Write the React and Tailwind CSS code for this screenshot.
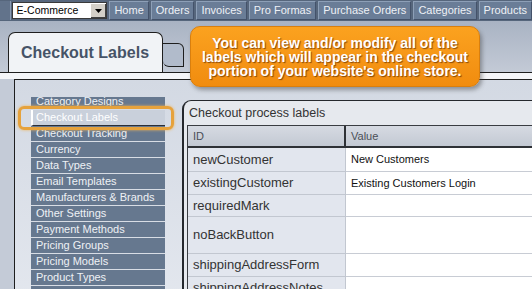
const navItems = ["Home", "Orders", "Invoices", "Pro Formas", "Purchase Orders", "Categories", "Products"];

const menuItems = [
  "Category Designs",
  "Checkout Labels",
  "Checkout Tracking",
  "Currency",
  "Data Types",
  "Email Templates",
  "Manufacturers & Brands",
  "Other Settings",
  "Payment Methods",
  "Pricing Groups",
  "Pricing Models",
  "Product Types",
  "Shipping",
];

const rows = [
  { id: "newCustomer", value: "New Customers", h: "h-[24px]" },
  { id: "existingCustomer", value: "Existing Customers Login", h: "h-[23px]" },
  { id: "requiredMark", value: "", h: "h-[22px]" },
  { id: "noBackButton", value: "", h: "h-[37px]" },
  { id: "shippingAddressForm", value: "", h: "h-[23px]" },
  { id: "shippingAddressNotes", value: "", h: "h-[23px]" },
];

function TopNav() {
  return (
    <div className="flex h-[21px] items-start bg-[#56667c] pt-[1px]">
      <div className="h-[19px] w-[13px] border-r border-[#8a9bb2] bg-[#62738b]" />
      <div className="ml-[1px] mt-[1px] flex h-[17px] w-[120px] items-center border border-[#3a3a3a] bg-white">
        <span className="flex-1 pl-[4px] text-[10.5px] text-black">E-Commerce</span>
        <div className="flex h-[15px] w-[16px] items-center justify-center border-l border-t border-l-white border-t-white bg-[#d4d0c8] shadow-[inset_-1px_-1px_0_#404040]">
          <svg width="7" height="4" viewBox="0 0 7 4">
            <path d="M0 0h7L3.5 4z" fill="#000" />
          </svg>
        </div>
      </div>
      <div className="ml-[2px] flex gap-[2px]">
        {navItems.map((item) => (
          <div
            key={item}
            className="flex h-[19px] items-center whitespace-nowrap border border-[#8d9fb7] border-b-[#44526a] border-r-[#44526a] bg-[#6a7d97] px-[4px] text-[11px] text-[#eef1f6]"
          >
            {item}
          </div>
        ))}
      </div>
    </div>
  );
}

function Tabs() {
  return (
    <div className="flex h-[52px] items-end border-b border-[#1e1e1e] bg-gradient-to-b from-[#a9b3c3] to-[#c3cad6] pl-[8px]">
      <div className="flex h-[40px] w-[155px] items-center rounded-t-[7px] border border-b-0 border-[#1e1e1e] bg-[#f1f3f6] pl-[12px] text-[16px] font-bold text-[#465367]">
        Checkout Labels
      </div>
      <div className="mb-[5px] h-[24px] w-[21px] rounded-tr-[6px] rounded-bl-[6px] border border-l-0 border-[#1e1e1e] bg-[#b1bbcb]" />
    </div>
  );
}

function SideMenu() {
  return (
    <div className="mt-[17px] h-[200px] w-[134px] overflow-hidden">
      <div className="-mt-[3px]">
        {menuItems.map((item) =>
          item === "Checkout Labels" ? (
            <div
              key={item}
              className="flex h-[16px] items-center border-b border-l-2 border-b-[#2a2f38] border-l-white bg-[#c9d0db] pl-[3px] text-[11px] text-white"
            >
              {item}
            </div>
          ) : (
            <div
              key={item}
              className="flex h-[16px] items-center border-b border-[#d8dde5] bg-[#66788f] pl-[5px] text-[11px] text-[#eef1f5]"
            >
              {item}
            </div>
          )
        )}
      </div>
    </div>
  );
}

function LabelsTable() {
  return (
    <div className="mt-[20px] h-[200px] flex-1 rounded-tl-[9px] border-l-2 border-t border-[#25282d] bg-[#e6e9ee] pl-[3px]">
      <div className="flex h-[24px] items-center pl-[2px] text-[12.5px] text-[#333]">Checkout process labels</div>
      <div className="grid grid-cols-[158px_1fr] border-l border-t border-[#3a3d42]">
        <div className="flex h-[22px] items-center border-b-2 border-r-2 border-[#2e3136] bg-gradient-to-b from-[#d6dae2] to-[#c3c9d3] pl-[5px] text-[11px] text-[#4a4f57]">
          ID
        </div>
        <div className="flex h-[22px] items-center border-b-2 border-[#2e3136] bg-gradient-to-b from-[#d6dae2] to-[#c3c9d3] pl-[5px] text-[11px] text-[#4a4f57]">
          Value
        </div>
        {rows.map((r) => (
          <div key={r.id} className="contents">
            <div className={`flex ${r.h} items-center border-b border-r border-[#c2c7d0] bg-[#e2e6ee] pl-[5px] text-[13px] text-[#333]`}>
              {r.id}
            </div>
            <div className={`flex ${r.h} items-center border-b border-[#c8ccd4] bg-white pl-[5px] text-[11px] text-[#111]`}>
              {r.value}
            </div>
          </div>
        ))}
      </div>
    </div>
  );
}

export default function App() {
  return (
    <div className="relative h-[289px] w-[532px] overflow-hidden bg-[#c4cbd7] font-['Liberation_Sans',Arial,sans-serif]">
      <TopNav />
      <Tabs />
      <div className="h-[6px] bg-[#f4f5f8]" />
      <div className="pl-[14px]">
        <div className="flex h-[220px] items-start gap-[17px] border-l border-t border-[#1e1e1e] bg-gradient-to-b from-[#d3d9e3] to-[#e3e7ee] pl-[16px]">
          <SideMenu />
          <LabelsTable />
        </div>
      </div>

      {/* highlight ring around the selected menu item */}
      <div className="absolute left-[18px] top-[106px] h-[24px] w-[156px] rounded-[6px] border-[3px] border-[#e6a23c] shadow-[0_0_3px_#f0b55a]" />

      {/* callout */}
      <div className="absolute left-[190px] top-[26px] flex h-[61px] w-[290px] flex-col items-center justify-center rounded-[10px] border border-[#d97f0e] bg-gradient-to-b from-[#fba21f] to-[#f18c0e] text-center text-[14px] font-bold leading-[14px] text-white shadow-[2px_3px_4px_rgba(60,60,60,0.45)] [text-shadow:1px_1px_1px_rgba(90,40,0,0.7)]">
        <div>You can view and/or modify all of the</div>
        <div>labels which will appear in the checkout</div>
        <div>portion of your website's online store.</div>
      </div>
    </div>
  );
}
